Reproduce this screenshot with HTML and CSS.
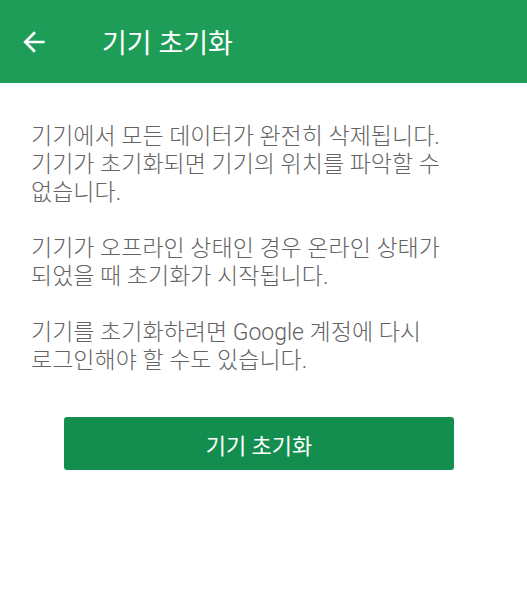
FILE: index.html
```html
<!DOCTYPE html>
<html lang="ko">
<head>
    <meta charset="UTF-8">
    <meta name="viewport" content="width=device-width, initial-scale=1.0">
    <title>기기 초기화</title>
    <link rel="stylesheet" href="styles.css">
</head>
<body>
    <header class="app-bar">
        <button class="back" type="button" aria-label="뒤로">
            <svg width="32" height="32" viewBox="0 0 24 24">
                <path d="M20 11H7.83l5.59-5.59L12 4l-8 8 8 8 1.41-1.41L7.83 13H20v-2z" fill="#fff"/>
            </svg>
        </button>
        <h1>기기 초기화</h1>
    </header>

    <main class="content">
        <p>기기에서 모든 데이터가 완전히 삭제됩니다. 기기가 초기화되면 기기의 위치를 파악할 수 없습니다.</p>
        <p>기기가 오프라인 상태인 경우 온라인 상태가 되었을 때 초기화가 시작됩니다.</p>
        <p>기기를 초기화하려면 Google 계정에 다시 로그인해야 할 수도 있습니다.</p>

        <div class="actions">
            <button class="erase" type="button">기기 초기화</button>
        </div>
    </main>
</body>
</html>
```

FILE: styles.css
```css
body {
    margin: 0;
    background: #fff;
    font-family: Roboto, "Noto Sans CJK KR", sans-serif;
}
.app-bar {
    display: flex;
    align-items: center;
    height: 83px;
    background-color: #1e9d58;
    color: #fff;
}
.back {
    display: flex;
    margin-left: 18px;
    padding: 0;
    border: none;
    background: none;
    cursor: pointer;
}
.app-bar h1 {
    margin: 0 0 0 52px;
    font-size: 27px;
    font-weight: 400;
}
.content {
    padding: 40px 40px 0 31px;
    color: #636363;
}
.content p {
    margin: 0 0 28px;
    font-size: 23px;
    font-weight: 300;
    line-height: 28px;
    word-break: keep-all;
}
.actions {
    display: flex;
    justify-content: center;
    padding-top: 14px;
}
.erase {
    width: 390px;
    height: 53px;
    background-color: #138e4f;
    color: #fff;
    border: none;
    border-radius: 3px;
    font-family: inherit;
    font-size: 22px;
    cursor: pointer;
}
```
